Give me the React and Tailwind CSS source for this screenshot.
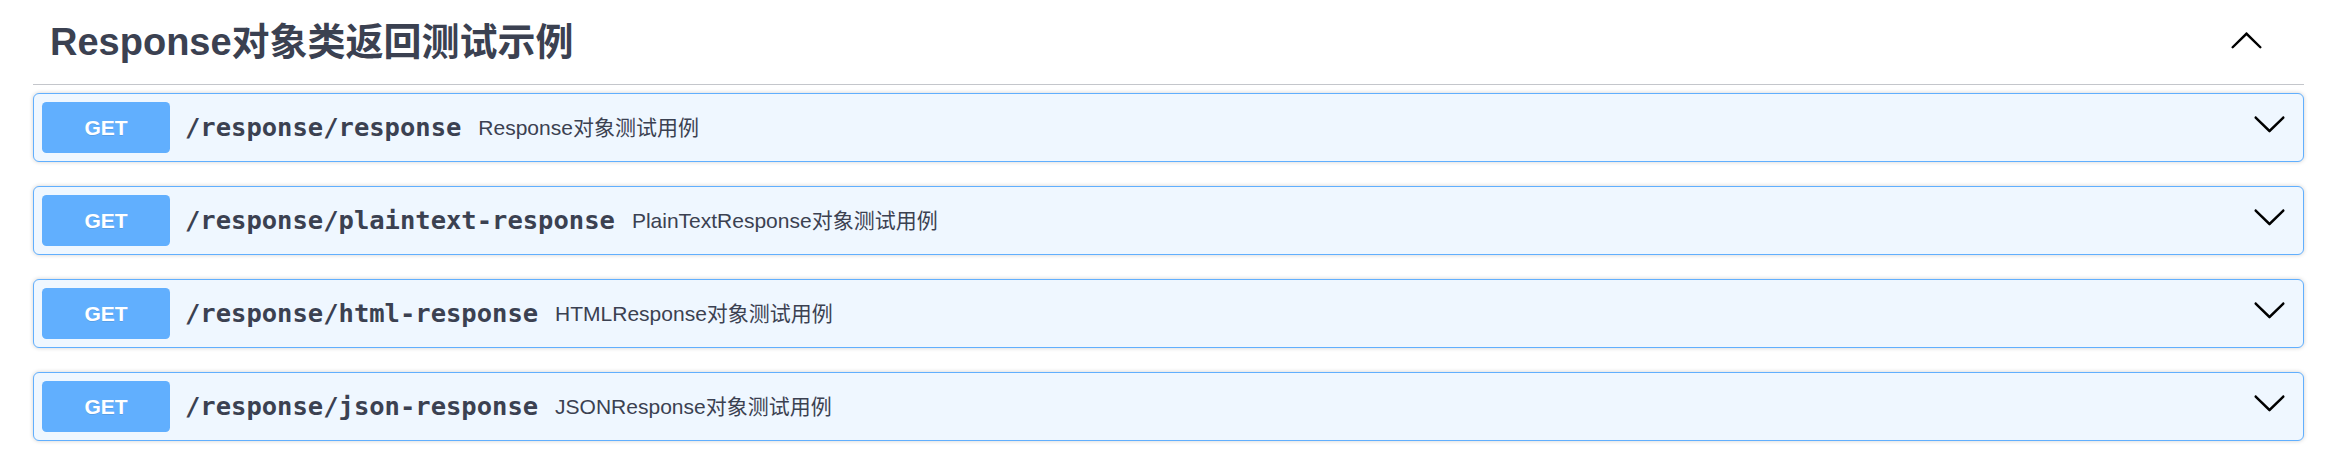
import React from 'react';

const TEXT = '#3b4151';

const endpoints = [
  { path: '/response/response', summary: 'Response对象测试用例' },
  { path: '/response/plaintext-response', summary: 'PlainTextResponse对象测试用例' },
  { path: '/response/html-response', summary: 'HTMLResponse对象测试用例' },
  { path: '/response/json-response', summary: 'JSONResponse对象测试用例' },
];

function ArrowDown({ className }) {
  return (
    <svg viewBox="0 0 20 20" width="35" height="35" className={className} fill="#000">
      <path d="M17.418 6.109c.272-.268.709-.268.979 0s.271.701 0 .969l-7.908 7.83c-.27.268-.707.268-.979 0l-7.908-7.83c-.27-.268-.27-.701 0-.969.271-.268.709-.268.979 0L10 13.25l7.418-7.141z" />
    </svg>
  );
}

function ArrowUp({ className }) {
  return (
    <svg viewBox="0 0 20 20" width="35" height="35" className={className} fill="#000">
      <path d="M17.418 14.908c.272.268.709.268.979 0 .27-.268.271-.701 0-.969l-7.908-7.83c-.27-.268-.707-.268-.979 0l-7.908 7.83c-.27.268-.27.701 0 .969.271.268.709.268.979 0L10 7.767l7.418 7.141z" />
    </svg>
  );
}

function Operation({ path, summary }) {
  return (
    <div className="flex h-[69px] items-center rounded-[6px] border border-[#61affe] bg-[#eff7ff] pl-[8px] pr-[16px] mb-[24px] shadow-[0_0_4px_rgba(0,0,0,0.19)]">
      <div
        className="flex h-[51px] w-[128px] shrink-0 items-center justify-center rounded-[4.5px] bg-[#61affe] text-[21px] font-bold text-white [text-shadow:0_1px_0_rgba(0,0,0,0.1)]"
        style={{ fontFamily: '"Liberation Sans", Arial, sans-serif' }}
      >
        GET
      </div>
      <span
        className="pl-[15px] pr-[17px] text-[25.5px] font-bold"
        style={{ color: TEXT, fontFamily: '"DejaVu Sans Mono", monospace' }}
      >
        {path}
      </span>
      <span
        className="flex-1 text-[21px]"
        style={{ color: TEXT, fontFamily: '"Liberation Sans", "Noto Sans CJK SC", sans-serif' }}
      >
        {summary}
      </span>
      <ArrowDown className="mb-[8px] shrink-0" />
    </div>
  );
}

export default function App() {
  return (
    <div className="min-h-[468px] w-[2346px] bg-white">
      <div className="ml-[33px] w-[2271px]">
        <div className="flex h-[85px] items-center border-b border-[#c4c6cb] pl-[17px] pr-[40px]">
          <h3
            className="flex-1 text-[38px] font-semibold"
            style={{ color: TEXT, fontFamily: '"Liberation Sans", "Noto Sans CJK SC", sans-serif' }}
          >
            Response对象类返回测试示例
          </h3>
          <ArrowUp className="mb-[6px] shrink-0" />
        </div>
        <div className="mt-[8px]">
          {endpoints.map((op) => (
            <Operation key={op.path} {...op} />
          ))}
        </div>
      </div>
    </div>
  );
}
